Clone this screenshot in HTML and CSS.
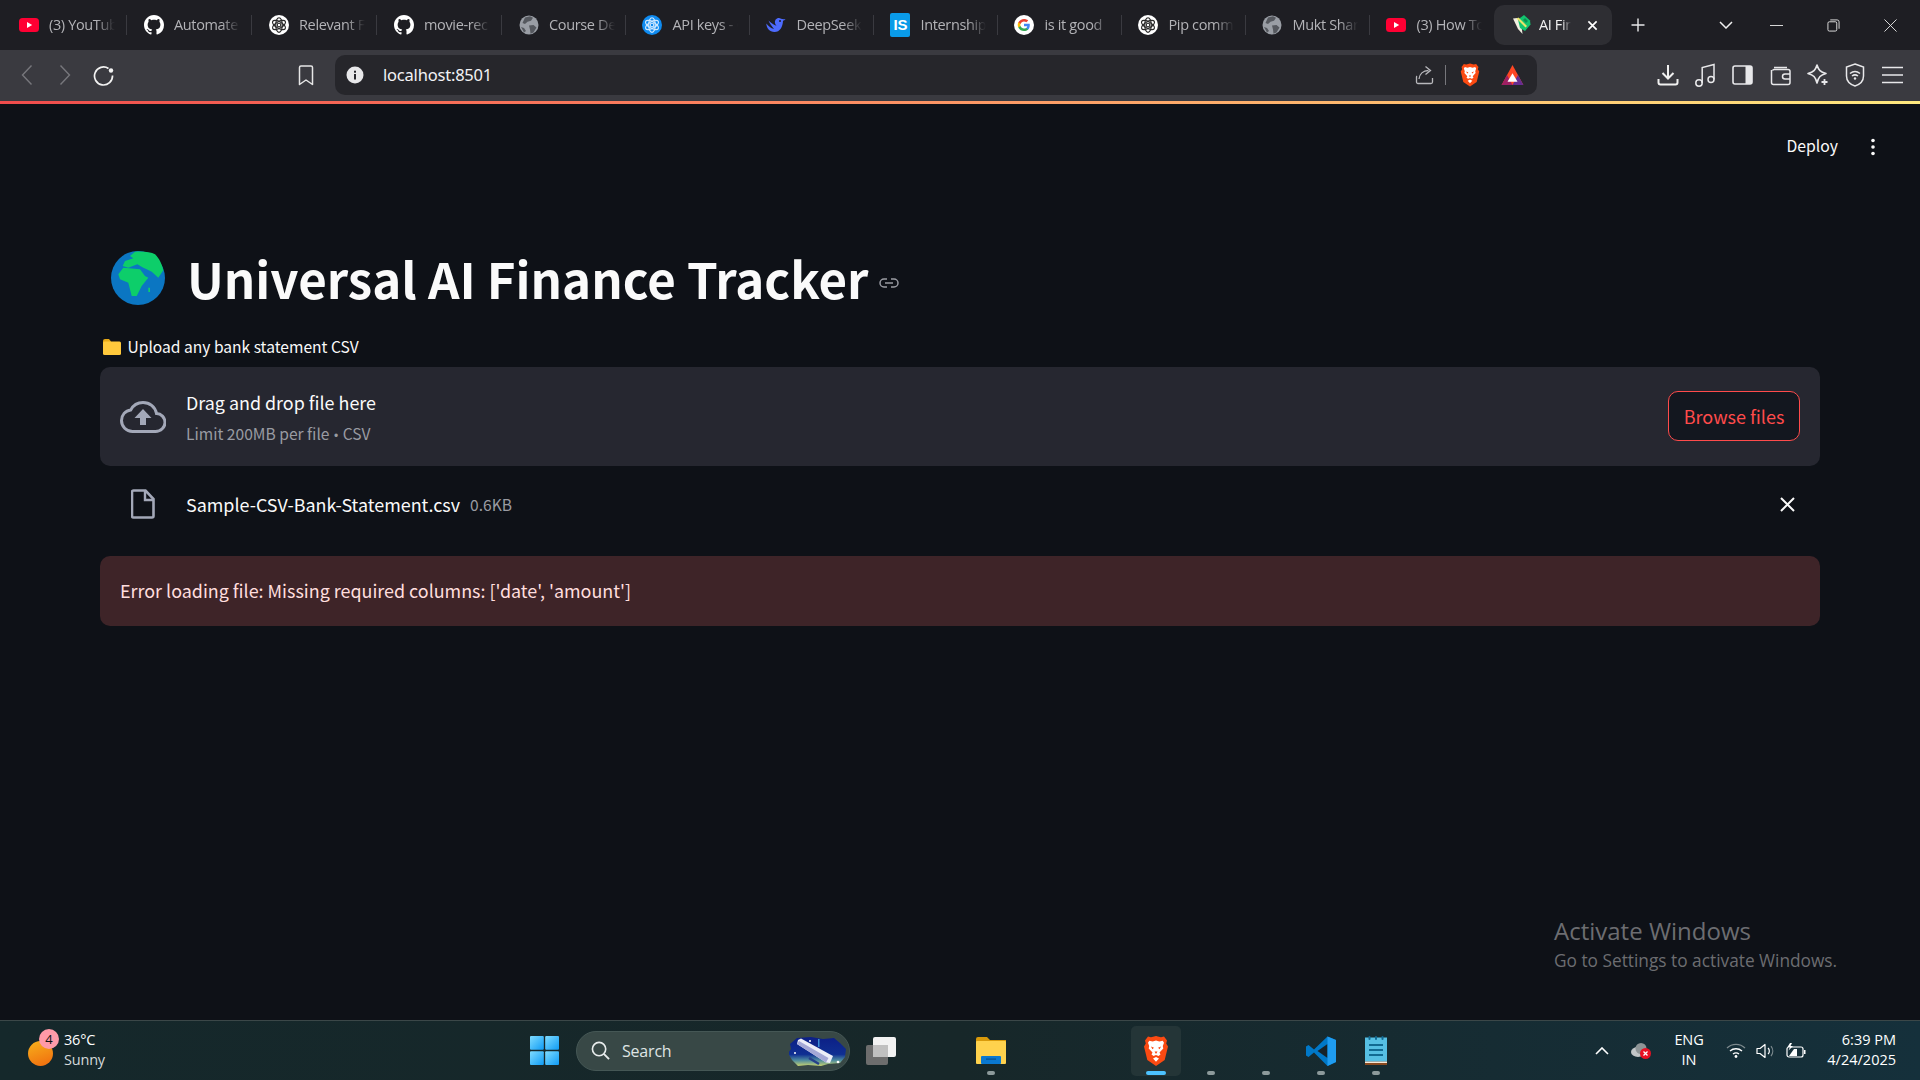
FILE: index.html
```html
<!DOCTYPE html>
<html lang="en">
<head>
<meta charset="utf-8">
<title>AI Finance Tracker</title>
<link rel="stylesheet" href="styles.css">
</head>
<body>
<svg class="defs" width="0" height="0" aria-hidden="true">
  <symbol id="yt" viewBox="0 0 20 20"><rect x="0" y="3" width="20" height="14" rx="3.5" fill="#ff0033"/><path d="M8 7l5.2 3L8 13z" fill="#fff"/></symbol>
  <symbol id="gh" viewBox="0 0 16 16"><path fill="#fff" d="M8 0C3.58 0 0 3.58 0 8c0 3.54 2.29 6.53 5.47 7.59.4.07.55-.17.55-.38 0-.19-.01-.82-.01-1.49-2.01.37-2.53-.49-2.69-.94-.09-.23-.48-.94-.82-1.13-.28-.15-.68-.52-.01-.53.63-.01 1.08.58 1.23.82.72 1.21 1.87.87 2.33.66.07-.52.28-.87.51-1.07-1.78-.2-3.64-.89-3.64-3.95 0-.87.31-1.59.82-2.15-.08-.2-.36-1.02.08-2.12 0 0 .67-.21 2.2.82.64-.18 1.32-.27 2-.27.68 0 1.36.09 2 .27 1.53-1.04 2.2-.82 2.2-.82.44 1.1.16 1.92.08 2.12.51.56.82 1.27.82 2.15 0 3.07-1.87 3.75-3.65 3.95.29.25.54.73.54 1.48 0 1.07-.01 1.93-.01 2.2 0 .21.15.46.55.38A8.013 8.013 0 0016 8c0-4.42-3.58-8-8-8z"/></symbol>
  <symbol id="knot" viewBox="0 0 20 20"><g fill="none" stroke="currentColor" stroke-width="1.150"><ellipse cx="10" cy="10" rx="3.300" ry="7.300"/><ellipse cx="10" cy="10" rx="3.300" ry="7.300" transform="rotate(60 10 10)"/><ellipse cx="10" cy="10" rx="3.300" ry="7.300" transform="rotate(120 10 10)"/><circle cx="10" cy="10" r="1.800"/></g></symbol>
  <symbol id="globe" viewBox="0 0 20 20"><circle cx="10" cy="10" r="9.500" fill="#9a9ea5"/><path d="M6 2.500l5-1.200 3 1.500-2 3-3.500 1L6 9 3.500 8zM10 10.500l4.500-.5 3 2.500-3 5-3 1.300-.5-4.300zM2 12l3 1 2 3-2 1.500z" fill="#55585e"/></symbol>
  <symbol id="brave" viewBox="0 0 26 30"><path d="M13 0l5 1.200 3-.6 3 3.900-.8 3 1.800 3-3.300 13.500L13 30 4.300 24 1 10.500l1.800-3-.8-3 3-3.900 3 .6z" fill="#fb4a12"/><path d="M13 4.500l3.300 1 3.400-.8 1.300 2-1.200 3.300.5 2.500-3.800 4 1 2-2 1.500-2.500-1-2.500 1-2-1.500 1-2-3.800-4 .5-2.500L5 6.700l1.300-2 3.400.8zM13 21l3 1.600-3 3.200-3-3.200z" fill="#fff"/><path d="M8 10.500l3 1.300-1.600 1.400zM18 10.500l-3 1.300 1.600 1.400zM11.500 15.500h3L13 18z" fill="#fb4a12"/></symbol>
</svg>

<header class="tabstrip">
  <div class="tab tab-wide"><svg class="fav"><use href="#yt"/></svg><span class="tab-label">(3) YouTube</span></div>
  <div class="tab tab-wide"><svg class="fav"><use href="#gh"/></svg><span class="tab-label">Automate</span></div>
  <div class="tab tab-wide"><span class="knot-icon"><svg class="knot-svg"><use href="#knot"/></svg></span><span class="tab-label">Relevant Files</span></div>
  <div class="tab tab-wide"><svg class="fav"><use href="#gh"/></svg><span class="tab-label">movie-rec</span></div>
  <div class="tab tab-narrow"><svg class="fav"><use href="#globe"/></svg><span class="tab-label">Course Details</span></div>
  <div class="tab"><span class="knot-icon knot-blue"><svg class="knot-svg"><use href="#knot"/></svg></span><span class="tab-label">API keys - OpenAI</span></div>
  <div class="tab"><svg class="fav" viewBox="0 0 20 20"><path d="M19.500 4c-.6 1.200-1.700 1.600-2.500 1.700-.2 6-3 11.300-8.500 11.300C3.500 17 .5 13 .3 8.500c2.500 2.700 4.500 5 7.700 5.500C5.500 11 3.800 8.500 2.500 5.500 5 8 8 10 10.500 10.800c-1.500-1.500-2.300-3.800-1-6 1.500-2 4-2.300 5.500-1 1.500.5 3 .6 4.500.2z" fill="#4d6bfe"/><circle cx="14" cy="6" r="1" fill="#1e1e23"/></svg><span class="tab-label">DeepSeek</span></div>
  <div class="tab"><span class="is-icon">IS</span><span class="tab-label">Internship</span></div>
  <div class="tab"><svg class="fav" viewBox="0 0 20 20"><circle cx="10" cy="10" r="10" fill="#fff"/><path d="M15.800 10.100c0-.4 0-.9-.1-1.300H10v2.500h3.300c-.1.800-.6 1.500-1.200 1.900v1.600h2c1.100-1.100 1.700-2.700 1.700-4.700z" fill="#4285f4"/><path d="M10 16c1.600 0 3-.5 4.100-1.500l-2-1.600c-.6.400-1.300.6-2.100.6-1.600 0-3-1.100-3.500-2.500H4.400V12.700C5.500 14.700 7.600 16 10 16z" fill="#34a853"/><path d="M6.500 11c-.3-.8-.3-1.700 0-2.500V6.900H4.400c-.9 1.800-.9 3.900 0 5.700z" fill="#fbbc05"/><path d="M10 6.400c.9 0 1.700.3 2.400.9l1.800-1.800C13.100 4.500 11.600 4 10 4 7.600 4 5.500 5.300 4.400 7.300l2.100 1.600C7 7.500 8.400 6.400 10 6.400z" fill="#ea4335"/></svg><span class="tab-label">is it good</span></div>
  <div class="tab"><span class="knot-icon"><svg class="knot-svg"><use href="#knot"/></svg></span><span class="tab-label">Pip command</span></div>
  <div class="tab"><svg class="fav"><use href="#globe"/></svg><span class="tab-label">Mukt Sharma</span></div>
  <div class="tab tab-last"><svg class="fav"><use href="#yt"/></svg><span class="tab-label">(3) How To</span></div>
  <div class="tab-active">
    <svg class="fav-active" viewBox="0 0 18 20"><path d="M0 3.500l4.500-.5 4 8.500 1 7.500L5 14z" fill="#f2efe0"/><path d="M5 4.500L11 0l6 5.500.5 4-5.500 6.500-5-3z" fill="#12c46e"/><path d="M3.500 3.500l9 9 1.500-1.500-8.500-8.500z" fill="#e9e36a"/><path d="M12 3l3 3-2 2-3-3z" fill="#0a8f52"/></svg>
    <span class="tab-label tab-label-active">AI Finance</span>
    <svg class="tab-close" viewBox="0 0 12 12"><path d="M1.500 1.500l9 9M10.500 1.500l-9 9" stroke="#fff" stroke-width="1.800" fill="none"/></svg>
  </div>
  <div class="tab-plus"><svg width="16" height="16" viewBox="0 0 16 16"><path d="M8 1.500v13M1.500 8h13" stroke="#e8e8ea" stroke-width="1.400" fill="none"/></svg></div>
  <div class="win-controls">
    <svg class="win-chevron" viewBox="0 0 14 8"><path d="M1 1l6 6 6-6" stroke="#f0f0f0" stroke-width="1.500" fill="none"/></svg>
    <svg class="win-btn win-min" viewBox="0 0 14 14"><path d="M0 7h14" stroke="#e6e6e6" fill="none"/></svg>
    <svg class="win-btn win-restore" viewBox="0 0 14 14"><rect x="1" y="3" width="9.500" height="10" rx="1.500" stroke="#e6e6e6" fill="none"/><path d="M3.500 1h7.500a2 2 0 012 2v7.500" stroke="#e6e6e6" fill="none"/></svg>
    <svg class="win-btn win-close" viewBox="0 0 14 14"><path d="M.5.500l13 13M13.500.500l-13 13" stroke="#e6e6e6" fill="none"/></svg>
  </div>
</header>

<nav class="toolbar">
  <div class="nav-group">
    <div class="tool"><svg width="12" height="22" viewBox="0 0 12 22"><path d="M10.500 1.500L1.500 11l9 9.500" stroke="#77777c" stroke-width="1.400" fill="none"/></svg></div>
    <div class="tool"><svg width="12" height="22" viewBox="0 0 12 22"><path d="M1.500 1.500l9 9.500-9 9.500" stroke="#77777c" stroke-width="1.400" fill="none"/></svg></div>
    <div class="tool"><svg width="21" height="21" viewBox="0 0 21 21"><path d="M15.500 3.500A9 9 0 1019.500 10.500" stroke="#f2f2f2" stroke-width="1.700" fill="none"/><circle cx="18" cy="5.500" r="2.200" fill="#f2f2f2"/></svg></div>
  </div>
  <div class="bookmark"><svg width="16" height="21" viewBox="0 0 16 21"><path d="M1.500 2.500a1.500 1.500 0 011.500-1.500h10a1.500 1.500 0 011.500 1.500v17L8 15l-6.500 4.500z" stroke="#e6e6e6" stroke-width="1.500" fill="none" stroke-linejoin="round"/></svg></div>
  <div class="address">
    <svg class="addr-info" viewBox="0 0 18 18"><circle cx="9" cy="9" r="8.500" fill="#e8e8ea"/><rect x="8" y="8" width="2" height="5.500" fill="#26262b"/><rect x="8" y="4.700" width="2" height="2" fill="#26262b"/></svg>
    <span class="addr-text">localhost:8501</span>
    <div class="addr-right">
      <svg class="addr-share" viewBox="0 0 20 20"><path d="M17.500 13v4a1.500 1.500 0 01-1.500 1.500H3A1.500 1.500 0 011.500 17v-5a1.500 1.500 0 01.5-1" stroke="#b8b8bc" stroke-width="1.300" fill="none"/><path d="M4 14c.5-5 4-8.500 9.500-8.500M10.500 1.500l5 4-5 4" stroke="#b8b8bc" stroke-width="1.300" fill="none"/></svg>
      <span class="addr-sep"></span>
      <svg class="addr-brave"><use href="#brave"/></svg>
      <svg class="addr-bat" viewBox="0 0 24 22"><path d="M12 0L0 22h24z" fill="#ff4724"/><path d="M0 22l6-11 6 11z" fill="#9e1f63"/><path d="M24 22H12l6-11z" fill="#662d91"/><path d="M12 9l5.500 9.500h-11z" fill="#fff"/></svg>
    </div>
  </div>
  <div class="tool-group">
    <div class="tool-r"><svg width="22" height="22" viewBox="0 0 22 22"><path d="M11 1v13M5.500 9l5.500 5.500L16.500 9" stroke="#f0f0f0" stroke-width="2" fill="none"/><path d="M1.500 15v3.500a2 2 0 002 2h15a2 2 0 002-2V15" stroke="#f0f0f0" stroke-width="2" fill="none"/></svg></div>
    <div class="tool-r"><svg width="22" height="24" viewBox="0 0 22 24"><circle cx="5" cy="20" r="3.200" stroke="#e8e8ea" stroke-width="1.500" fill="none"/><circle cx="17" cy="16.500" r="3" stroke="#e8e8ea" stroke-width="1.500" fill="none"/><path d="M8.200 20V4.500L20 1.500v15" stroke="#e8e8ea" stroke-width="1.500" fill="none"/></svg></div>
    <div class="tool-r"><svg width="21" height="20" viewBox="0 0 21 20"><rect x="1" y="1" width="19" height="18" rx="2" stroke="#e8e8ea" stroke-width="1.600" fill="none"/><rect x="13.500" y="1" width="6.500" height="18" fill="#e8e8ea"/></svg></div>
    <div class="tool-r"><svg width="21" height="21" viewBox="0 0 21 21"><path d="M4 2.500h13M2.500 5.500A2 2 0 014 4.500h14a2 2 0 012 2v11a2 2 0 01-2 2H3.500a2 2 0 01-2-2V5" stroke="#e8e8ea" stroke-width="1.500" fill="none"/><path d="M20 9h-5a2.500 2.500 0 000 5h5" stroke="#e8e8ea" stroke-width="1.500" fill="none"/></svg></div>
    <div class="tool-r"><svg width="22" height="24" viewBox="0 0 22 24"><path d="M10 2c1.500 5 3.500 7 9 8.500-5.500 1.500-7.500 3.500-9 9.500-1.500-6-3.500-8-9-9.500C6.500 9 8.500 7 10 2z" stroke="#e8e8ea" stroke-width="1.600" fill="none" stroke-linejoin="round"/><path d="M17.500 16v6M14.500 19h6" stroke="#e8e8ea" stroke-width="1.800" fill="none"/></svg></div>
    <div class="tool-r"><svg width="20" height="24" viewBox="0 0 20 24"><path d="M10 1l8.500 3v9c0 5-4 8.500-8.500 10C5.500 21.500 1.500 18 1.500 13V4z" stroke="#e8e8ea" stroke-width="1.500" fill="none"/><path d="M5 10.500c3-2.500 7-2.500 10 0M7 13c2-1.500 4-1.500 6 0" stroke="#e8e8ea" stroke-width="1.500" fill="none"/><circle cx="10" cy="15.500" r="1.200" fill="#e8e8ea"/></svg></div>
    <div class="tool-r"><svg width="21" height="18" viewBox="0 0 21 18"><path d="M0 1.500h21M0 9h21M0 16.500h21" stroke="#e8e8ea" stroke-width="1.700" fill="none"/></svg></div>
  </div>
</nav>
<div class="accent"></div>

<main class="app">
  <div class="app-header">
    <span class="deploy">Deploy</span>
    <svg class="kebab" viewBox="0 0 4 18"><circle cx="2" cy="2.500" r="1.800" fill="#fafafa"/><circle cx="2" cy="9" r="1.800" fill="#fafafa"/><circle cx="2" cy="15.500" r="1.800" fill="#fafafa"/></svg>
  </div>

  <h1 class="title">
    <svg class="title-globe" viewBox="0 0 54 54"><circle cx="27" cy="27" r="27" fill="#0b76c2"/><path d="M24 .7C32 0 40 1 44 3.300c4 3.700 7 9.700 8.300 16l-5 7.400-6.600-6-5-2.400-3.400-1.600-6-3.400-9 3.400-5.600-1.700L14 10l8.300-2.700L19 5z" fill="#0dce6a"/><path d="M7.300 23.300l5-6.600L29 18.300l5 6.700 3.300 1.700-6.600 8.300-5 10h-5l-3.400-13.300L9 28.300z" fill="#0dce6a"/><path d="M37.300 36.700H39V41h-1.700z" fill="#0dce6a"/></svg>
    <span class="title-text">Universal AI Finance Tracker</span>
    <svg class="title-link" viewBox="0 0 20 10"><path d="M8 1H5a4 4 0 000 8h3M12 1h3a4 4 0 010 8h-3M6 5h8" stroke="#9a9ca3" stroke-width="1.500" fill="none"/></svg>
  </h1>

  <div class="label"><svg class="label-folder" viewBox="0 0 18 17"><path d="M0 3a2 2 0 012-2h4l2 2.500V5H0z" fill="#e6a817"/><rect x="0" y="3.500" width="18" height="13.500" rx="1.500" fill="#ffc93c"/></svg><span>Upload any bank statement CSV</span></div>

  <section class="dropzone">
    <svg class="cloud" viewBox="0 0 46 32"><path d="M36.500 12.500C35 5.500 29.500 1.500 23 1.500c-5.300 0-9.900 3-12.200 7.400C5.300 9.500 1.500 14 1.500 19.500c0 6 4.800 11 11 11h23c5.300 0 9.500-4.300 9.500-9 0-5-3.900-9-8.500-9z" stroke="#a3a8b8" stroke-width="3" fill="none"/><path d="M23 8l8.500 9H26v7h-6v-7h-5.500z" fill="#a3a8b8"/></svg>
    <div class="drop-text">
      <div class="drop-main">Drag and drop file here</div>
      <div class="drop-sub">Limit 200MB per file <span class="bullet">•</span> CSV</div>
    </div>
    <button class="browse">Browse files</button>
  </section>

  <div class="file-row">
    <svg class="file-icon" viewBox="0 0 24 30"><path d="M2.500 1.500h12l8 8.500v17a1.500 1.500 0 01-1.500 1.500H2.500A1.500 1.500 0 011 27V3a1.500 1.500 0 011.500-1.500z" stroke="#a3a8b8" stroke-width="2.600" fill="none"/><path d="M14 2v9h8" stroke="#a3a8b8" stroke-width="2.400" fill="none"/></svg>
    <span class="file-name">Sample-CSV-Bank-Statement.csv</span>
    <span class="file-size">0.6KB</span>
    <svg class="file-x" viewBox="0 0 15 15"><path d="M1 1l13 13M14 1L1 14" stroke="#fafafa" stroke-width="2" fill="none"/></svg>
  </div>

  <div class="error">Error loading file: Missing required columns: ['date', 'amount']</div>

  <div class="activate">
    <div class="activate-title">Activate Windows</div>
    <div class="activate-sub">Go to Settings to activate Windows.</div>
  </div>
</main>

<footer class="taskbar">
  <div class="weather">
    <div class="weather-icon"><span class="weather-badge">4</span></div>
    <div class="weather-text"><div>36°C</div><div class="weather-sub">Sunny</div></div>
  </div>
  <div class="center">
    <svg class="start" viewBox="0 0 30 30"><defs><linearGradient id="w" x1="0" y1="0" x2="1" y2="1"><stop offset="0" stop-color="#7fdcff"/><stop offset="1" stop-color="#0f9bf5"/></linearGradient></defs><rect x="0" y="0" width="14.300" height="14.300" rx="1" fill="url(#w)"/><rect x="15.700" y="0" width="14.300" height="14.300" rx="1" fill="url(#w)"/><rect x="0" y="15.700" width="14.300" height="14.300" rx="1" fill="url(#w)"/><rect x="15.700" y="15.700" width="14.300" height="14.300" rx="1" fill="url(#w)"/></svg>
    <div class="search">
      <svg class="search-icon" viewBox="0 0 20 20"><circle cx="8.500" cy="8.500" r="7" stroke="#e8ecec" stroke-width="1.700" fill="none"/><path d="M13.500 13.500l5.500 5.500" stroke="#e8ecec" stroke-width="2" fill="none"/></svg>
      <span class="search-text">Search</span>
      <svg class="search-art" viewBox="0 0 58 30"><defs><linearGradient id="sky" x1="0" y1="0" x2="0" y2="1"><stop offset="0" stop-color="#0c1f86"/><stop offset=".6" stop-color="#0f2f92"/><stop offset=".8" stop-color="#4c8aa0"/><stop offset="1" stop-color="#c6d270"/></linearGradient></defs><path d="M1 8l7-6 14-1 12 2 11-1 6 5 6 6-1 8-5 6-12 1-7 2-13-1-10 1-6-6-4-7 3-4z" fill="url(#sky)"/><path d="M9 4l3-1.500 32 17.500-3 7-4-.5L8 8z" fill="#eceef8"/><path d="M8 8l29 18.500 2.500-4.500L10 5z" fill="#a4a8d6"/><rect x="29" y="3" width="1.500" height="8" fill="#3a8fd6"/><path d="M20 22l10 6" stroke="#27408a" stroke-width="2.500"/><circle cx="21" cy="5" r="1" fill="#fff"/><circle cx="49" cy="26" r="1.300" fill="#fff"/><circle cx="6" cy="17" r="1" fill="#fff"/></svg>
    </div>
    <div class="slots">
      <div class="slot"><svg class="task-view" viewBox="0 0 30 28"><rect x="7" y="0" width="23" height="20" rx="2" fill="#f2f2f2"/><rect x="0" y="8" width="22" height="20" rx="2" fill="#6d6d6d"/><rect x="7" y="8" width="15" height="12" fill="#c0c0c0"/></svg></div>
      <div class="slot"></div>
      <div class="slot"><svg class="explorer" viewBox="0 0 30 27"><path d="M0 2a2 2 0 012-2h9l3 3h16v6H0z" fill="#d99a0b"/><rect x="0" y="4" width="30" height="23" rx="1" fill="#ffd24d"/><rect x="5" y="19" width="20" height="8" rx="1" fill="#0a78d0"/><rect x="10" y="21.500" width="10" height="1.200" fill="#064f8e"/></svg><span class="dot"></span></div>
      <div class="slot"></div>
      <div class="slot"></div>
      <div class="slot"><div class="tile"><svg class="task-brave"><use href="#brave"/></svg></div><span class="dot dot-active"></span></div>
      <div class="slot"><span class="dot"></span></div>
      <div class="slot"><span class="dot"></span></div>
      <div class="slot"><svg class="vscode" viewBox="0 0 30 30"><path d="M21.500.500L30 4v22l-8.500 4L8 16.500 2.500 21 0 19.500V10.500L2.500 9 8 13.500z" fill="#0078c8"/><path d="M21.500 8L11.500 15l10 7z" fill="#16232a"/><path d="M21.500.500L30 4v22l-8.500 4z" fill="#1f9cf0"/></svg><span class="dot"></span></div>
      <div class="slot"><svg class="notepad" viewBox="0 0 22 29"><rect x="0" y="1.500" width="22" height="24" fill="#56bfe3"/><rect x="0" y="25.500" width="22" height="1.500" fill="#f5e8d8"/><rect x="0" y="27" width="22" height="2" fill="#8a4a20"/><rect x="3.500" y="0" width="2" height="4" rx="1" fill="#126a92"/><rect x="10" y="0" width="2" height="4" rx="1" fill="#126a92"/><rect x="16.500" y="0" width="2" height="4" rx="1" fill="#126a92"/><path d="M4 9h14M4 14h14M4 19h14" stroke="#126a92" stroke-width="2"/></svg><span class="dot"></span></div>
    </div>
  </div>
  <div class="tray">
    <div class="tray-item tray-chev"><svg width="14" height="8" viewBox="0 0 14 8"><path d="M1 7l6-6 6 6" stroke="#fff" stroke-width="1.600" fill="none"/></svg></div>
    <div class="tray-item tray-od"><svg width="20" height="16" viewBox="0 0 20 16"><ellipse cx="7" cy="9" rx="7" ry="5" fill="#c2c6c8"/><circle cx="10" cy="5.500" r="5.500" fill="#8e9496"/><circle cx="14.500" cy="10.500" r="5.500" fill="#e81123"/><path d="M12.500 8.500l4 4M16.500 8.500l-4 4" stroke="#fff" stroke-width="1.300"/></svg></div>
    <div class="tray-item tray-lang"><div>ENG</div><div>IN</div></div>
    <div class="tray-item tray-wifi"><svg width="20" height="15" viewBox="0 0 20 15"><path d="M1 5a13 13 0 0118 0" stroke="#7d8a8e" stroke-width="1.300" fill="none"/><path d="M4 8a9 9 0 0112 0M7 11a5 5 0 016 0" stroke="#fff" stroke-width="1.400" fill="none"/><circle cx="10" cy="13.500" r="1.400" fill="#fff"/></svg></div>
    <div class="tray-item tray-vol"><svg width="20" height="16" viewBox="0 0 20 16"><path d="M1 5.500h3L9 1.500v13L4 10.500H1z" stroke="#fff" stroke-width="1.200" fill="none" stroke-linejoin="round"/><path d="M12 5a4 4 0 010 6" stroke="#fff" stroke-width="1.200" fill="none"/><path d="M15 3a8 8 0 010 10" stroke="#7d8a8e" stroke-width="1.200" fill="none"/></svg></div>
    <div class="tray-item tray-bat"><svg width="20" height="16" viewBox="0 0 20 16"><rect x="1" y="4" width="16" height="10" rx="2" stroke="#fff" stroke-width="1.200" fill="none"/><rect x="18" y="7" width="1.500" height="4" fill="#fff"/><path d="M3 13l5-7h3v7z" fill="#fff"/><path d="M4 0L1.500 4h2.500L2.500 7.500 7 3H4.500L6 0z" fill="#fff"/></svg></div>
    <div class="clock"><div>6:39 PM</div><div>4/24/2025</div></div>
  </div>
</footer>
</body>
</html>
```

FILE: styles.css
```css
* { box-sizing: border-box; }
html, body { margin: 0; padding: 0; height: 100%; }
body {
  width: 1920px;
  height: 1080px;
  overflow: hidden;
  display: flex;
  flex-direction: column;
  background: #0e1117;
  font-family: "Open Sans", "Noto Sans", sans-serif;
}
.defs { position: absolute; }

/* Tab strip */
.tabstrip {
  height: 50px;
  flex: none;
  display: flex;
  align-items: center;
  padding-left: 2.4px;
  background: #1e1e23;
}
.tab {
  flex: 0 0 124px;
  height: 20px;
  display: flex;
  align-items: center;
  gap: 10px;
  padding-left: 16.6px;
  border-right: 1px solid #3a3a40;
}
.tab-wide { flex-basis: 125px; }
.tab-narrow { flex-basis: 123.5px; }
.tab-last { border-right: 0; }
.fav { width: 20px; height: 20px; flex: none; }
.tab-label {
  width: 66px;
  overflow: hidden;
  white-space: nowrap;
  font-size: 14.5px;
  letter-spacing: -0.35px;
  line-height: 20px;
  color: #b3b3b7;
  -webkit-mask-image: linear-gradient(90deg, #000 72%, transparent 100%);
  mask-image: linear-gradient(90deg, #000 72%, transparent 100%);
}
.knot-icon {
  width: 20px;
  height: 20px;
  flex: none;
  border-radius: 50%;
  background: #fff;
  color: #2a2a2a;
  display: flex;
}
.knot-blue { background: #0f8bf0; color: #cfe8ff; }
.knot-svg { width: 20px; height: 20px; }
.is-icon {
  width: 20px;
  height: 24px;
  flex: none;
  border-radius: 2px;
  background: #0a9be8;
  color: #fff;
  font: 700 15px/24px "Liberation Sans", sans-serif;
  text-align: center;
}
.tab-active {
  flex: 0 0 118px;
  height: 40px;
  display: flex;
  align-items: center;
  padding-left: 19px;
  border-radius: 10px;
  background: #2e2e33;
}
.fav-active { width: 18px; height: 20px; flex: none; }
.tab-label-active { width: 32px; margin-left: 8px; color: #f2f2f2; }
.tab-close { width: 11px; height: 11px; margin-left: 16px; flex: none; }
.tab-plus { width: 52px; display: flex; justify-content: center; }
.win-controls { flex: 1; display: flex; align-items: center; }
.win-chevron { width: 14px; height: 8px; margin-left: 55.5px; }
.win-btn { width: 13px; height: 13px; }
.win-min { margin-left: 37px; }
.win-restore { margin-left: 44px; }
.win-close { margin-left: 44px; }

/* Toolbar */
.toolbar {
  height: 51px;
  flex: none;
  display: flex;
  align-items: center;
  padding: 0 9px 1px 8px;
  background: #3a3a40;
}
.nav-group { display: flex; }
.tool { width: 38px; height: 40px; display: flex; align-items: center; justify-content: center; }
.bookmark { width: 38px; margin-left: 165px; display: flex; justify-content: center; }
.address {
  width: 1202px;
  height: 40px;
  margin-left: 10px;
  display: flex;
  align-items: center;
  padding-left: 11px;
  border-radius: 10px;
  background: #26262b;
}
.addr-info { width: 18px; height: 18px; }
.addr-text {
  margin-left: 19px;
  font: 400 16.5px/22px "Noto Sans", sans-serif;
  letter-spacing: -0.2px;
  color: #f2f2f5;
}
.addr-right { margin-left: auto; display: flex; align-items: center; padding-right: 13px; }
.addr-share { width: 20px; height: 20px; }
.addr-sep { width: 1px; height: 20px; margin: 0 14px 0 10px; background: #77777c; }
.addr-brave { width: 20px; height: 24px; }
.addr-bat { width: 23px; height: 20px; margin-left: 21px; }
.tool-group { display: flex; margin-left: auto; }
.tool-r { width: 37.4px; display: flex; justify-content: center; align-items: center; height: 40px; }

.accent {
  height: 3px;
  flex: none;
  background: linear-gradient(90deg, #ef4c4c 0%, #fb8660 40%, #fdb86e 70%, #ffe97f 100%);
}

/* App */
.app {
  flex: 1;
  min-height: 0;
  position: relative;
  padding: 0 100px;
  color: #fafafa;
  font-family: "Noto Sans CJK SC", "Noto Sans", sans-serif;
}
.app-header {
  height: 86px;
  display: flex;
  align-items: center;
  justify-content: flex-end;
  margin-right: -55px;
}
.deploy { font-size: 15.75px; line-height: 24px; margin-top: -2px; }
.kebab { width: 4px; height: 18px; margin-left: 33px; }
.title {
  margin: 56px 0 0 11px;
  height: 64px;
  display: flex;
  align-items: center;
  font-size: 49.2px;
  font-weight: 700;
  line-height: 64px;
}
.title-globe { width: 54px; height: 54px; flex: none; }
.title-text { margin-left: 22px; }
.title-link { width: 20px; height: 10px; margin: 10px 0 0 11px; }
.label {
  display: flex;
  align-items: center;
  margin: 24px 0 0 3px;
  height: 24px;
  font-size: 15.6px;
  line-height: 24px;
}
.label-folder { width: 18px; height: 17px; margin-right: 6.5px; }
.dropzone {
  height: 99px;
  margin-top: 9px;
  display: flex;
  align-items: center;
  padding: 0 20px;
  border-radius: 10px;
  background: #262730;
}
.cloud { width: 46px; height: 32px; flex: none; }
.drop-text { margin-left: 20px; margin-top: 5px; }
.drop-main { font-size: 17.9px; line-height: 30px; }
.drop-sub { font-size: 15.6px; line-height: 30px; margin-top: 1px; color: #999ba2; }
.bullet { font-family: "Liberation Sans", sans-serif; font-size: 12px; margin: 0 1px; }
.browse {
  margin: -2px 0 0 auto;
  width: 132px;
  height: 50px;
  padding: 0;
  border: 1px solid #ff4b4b;
  border-radius: 10px;
  background: #13171f;
  color: #ff4b4b;
  font: 400 18px/28px "Noto Sans CJK SC", sans-serif;
}
.file-row {
  height: 50px;
  margin-top: 13px;
  display: flex;
  align-items: center;
  padding-left: 31px;
}
.file-icon { width: 24px; height: 30px; flex: none; }
.file-name { margin-left: 31px; font-size: 17.93px; line-height: 28px; }
.file-size { margin-left: 10px; font-size: 15.6px; line-height: 28px; color: #999ba2; }
.file-x { width: 15px; height: 15px; margin-left: auto; margin-right: 25px; }
.error {
  height: 70px;
  margin-top: 27px;
  padding: 0 20px 2px;
  display: flex;
  align-items: center;
  border-radius: 10px;
  background: #3e2428;
  color: #ffdede;
  font-size: 17.92px;
  line-height: 28px;
}
.activate {
  position: absolute;
  left: 1554px;
  top: 811px;
  font-family: "Open Sans", sans-serif;
  color: #6c6d71;
}
.activate-title { font-size: 24px; line-height: 32px; }
.activate-sub { font-size: 17.3px; line-height: 24px; margin-top: 2px; }

/* Taskbar */
.taskbar {
  height: 60px;
  flex: none;
  display: flex;
  align-items: center;
  border-top: 1px solid #3b4748;
  background: linear-gradient(90deg, #15282b 0%, #172729 50%, #15303b 100%);
  color: #fff;
  font-size: 14.5px;
}
.weather { width: 530px; display: flex; align-items: center; padding-left: 28px; }
.weather-icon {
  width: 25px;
  height: 25px;
  margin-top: 5px;
  position: relative;
  border-radius: 50%;
  background: linear-gradient(160deg, #f7b21c, #f06a0e);
}
.weather-badge {
  position: absolute;
  left: 11px;
  top: -12px;
  width: 20px;
  height: 20px;
  border-radius: 50%;
  background: #ff9aa8;
  color: #111;
  font-size: 13px;
  line-height: 20px;
  text-align: center;
}
.weather-text { margin-left: 11px; line-height: 20px; letter-spacing: -0.2px; margin-top: -2px; }
.weather-sub { color: #d4d9da; }
.center { display: flex; align-items: center; }
.start { width: 29px; height: 29px; flex: none; }
.search {
  width: 274px;
  height: 40px;
  margin-left: 17px;
  display: flex;
  align-items: center;
  padding-left: 14px;
  border: 1px solid #455755;
  border-radius: 20px;
  background: #384846;
}
.search-icon { width: 19px; height: 19px; flex: none; }
.search-text { margin-left: 12px; font-size: 16px; letter-spacing: -0.2px; color: #dfe4e4; }
.search-art { width: 58px; height: 30px; margin-left: auto; margin-right: 2px; }
.slots { display: flex; margin-left: 3.5px; }
.slot {
  width: 55px;
  height: 50px;
  position: relative;
  display: flex;
  align-items: center;
  justify-content: center;
}
.dot {
  position: absolute;
  left: 50%;
  bottom: 1px;
  width: 8px;
  height: 4px;
  margin-left: -4px;
  border-radius: 2px;
  background: #8d9a9b;
}
.dot-active { width: 20px; margin-left: -10px; background: #4cc2ff; }
.tile {
  width: 50px;
  height: 50px;
  display: flex;
  align-items: center;
  justify-content: center;
  border-radius: 5px;
  background: #243537;
}
.task-view { width: 30px; height: 28px; }
.explorer { width: 30px; height: 27px; }
.task-brave { width: 26px; height: 30px; }
.vscode { width: 30px; height: 30px; }
.notepad { width: 22px; height: 29px; }
.tray {
  margin-left: auto;
  padding-right: 24px;
  display: flex;
  align-items: center;
}
.tray-item { display: flex; align-items: center; justify-content: center; }
.tray-chev { width: 36px; }
.tray-od { width: 41px; }
.tray-lang {
  width: 56px;
  margin-right: 4px;
  flex-direction: column;
  line-height: 20px;
  letter-spacing: -0.1px;
  margin-top: -2px;
}
.tray-wifi { width: 30px; }
.tray-vol { width: 29px; }
.tray-bat { width: 31px; }
.clock { width: 85px; text-align: right; line-height: 20px; margin-top: -2px; }
```
